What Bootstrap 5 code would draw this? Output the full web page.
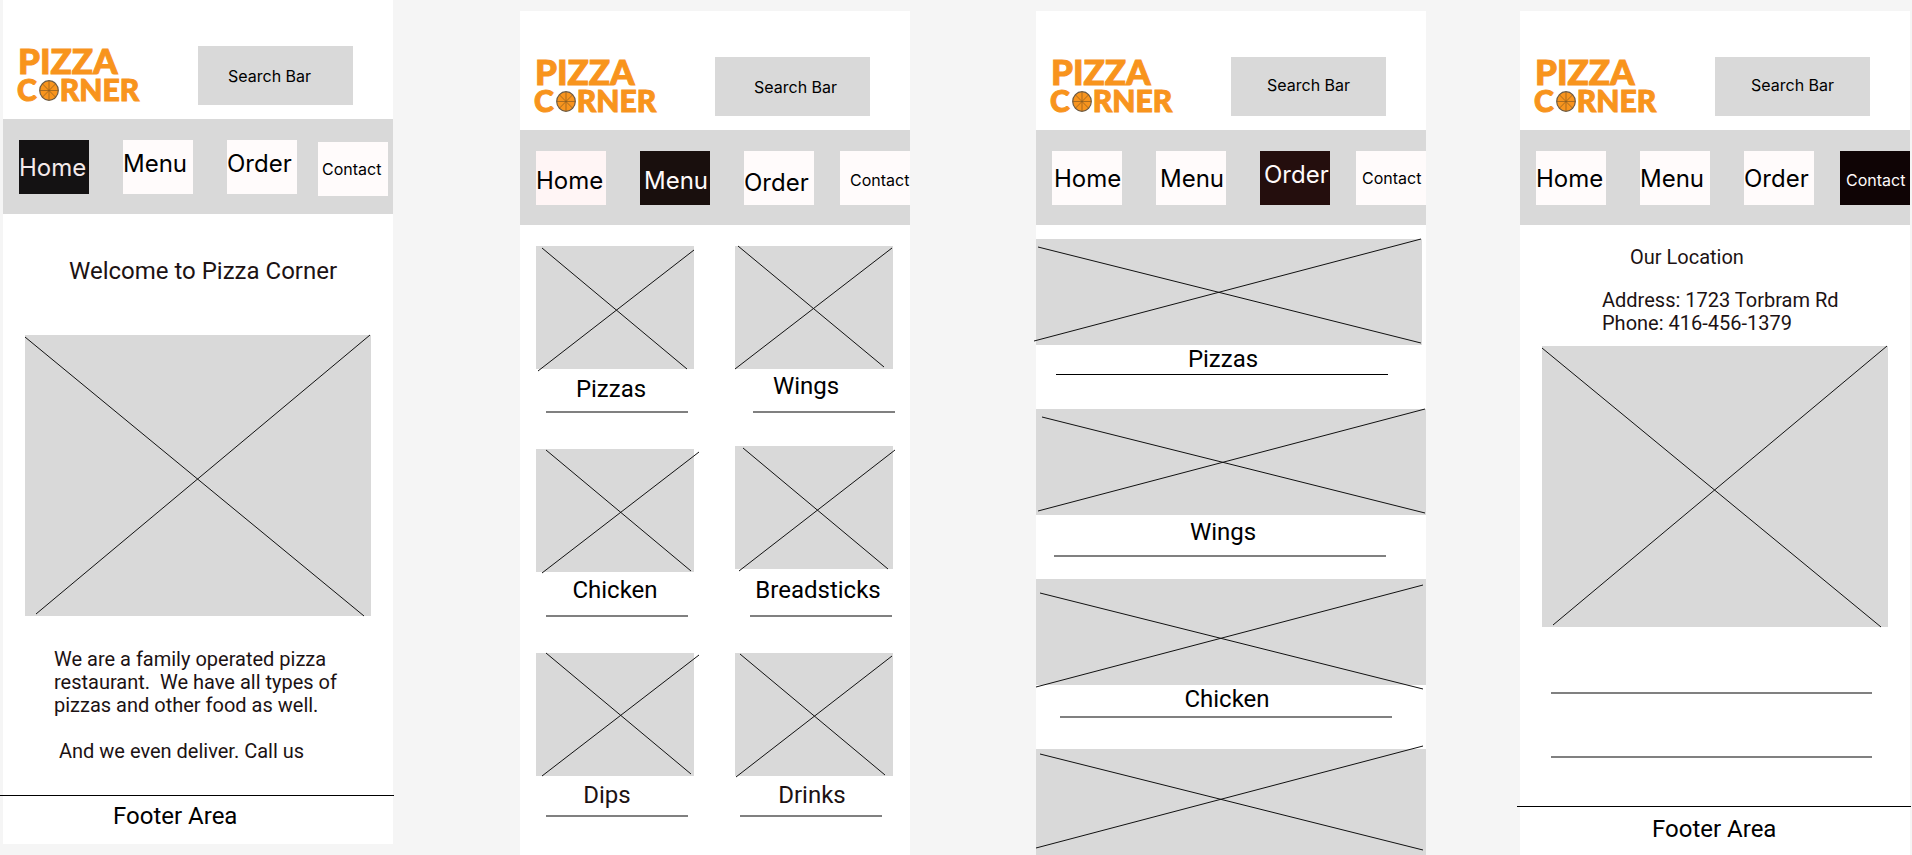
<!DOCTYPE html>
<html lang="en">
<head>
<meta charset="utf-8">
<meta name="viewport" content="width=device-width, initial-scale=1">
<title>Pizza Corner wireframes</title>
<link href="https://cdn.jsdelivr.net/npm/bootstrap@5.3.0/dist/css/bootstrap.min.css" rel="stylesheet">
<style>
  body { background: #f5f5f5; color: #000; font-family: Roboto, "Liberation Sans", sans-serif; overflow-x: hidden; }

  /* Artboards */
  .boards { padding: 0 2px 0 3px; }
  .board { flex: 1 1 0; min-width: 0; background: #fff; }
  .board + .board { margin-top: 11px; margin-left: 127px; }
  .board + .board.board-order { margin-left: 126px; }
  .board + .board.board-contact { margin-left: 94px; }

  /* Header */
  .board-head { padding: 46px 40px 14px 14px; }
  .brand { color: #f8941d; font-family: Lato, "Open Sans", sans-serif; font-weight: 900; text-decoration: none; white-space: nowrap; -webkit-text-stroke: 1px #f8941d; }
  .brand-top { font-size: 35px; line-height: 29px; padding-left: 1px; }
  .brand-bottom { font-size: 30px; line-height: 29px; }
  .brand-bottom svg { width: 20px; height: 21px; margin: 5px 1px 0 2px; }
  .search-box { width: 155px; height: 59px; padding: 0 0 0 36px; border: 0; border-radius: 0; background: #d9d9d9; font: 16px/20px Inter, "Liberation Sans", sans-serif; }
  .search-box::placeholder { color: #000; opacity: 1; }
  .board-home .search-box { padding-left: 30px; }
  .board-menu .search-box { padding-left: 39px; }

  /* Navigation bar */
  .board-nav { display: grid; grid-template-columns: 70fr 34fr 70fr 34fr 70fr 26fr 70fr; height: 95px; padding: 21px 0 20px 16px; background: #d9d9d9; font-family: Inter, "Liberation Sans", sans-serif; }
  .tab { display: flex; align-items: center; min-width: 0; height: 54px; background: #fffbfb; color: #000; font-size: 24px; line-height: 29px; text-decoration: none; white-space: nowrap; }
  .tab:nth-child(2) { grid-column: 3; }
  .tab:nth-child(3) { grid-column: 5; }
  .tab:nth-child(4) { grid-column: 7; }
  .tab-contact { font-size: 16px; line-height: 20px; padding-left: 6px; }
  .board-home .board-nav { grid-template-columns: 70fr 34fr 70fr 34fr 70fr 21fr 70fr; padding-right: 5px; }
  .board-home .tab-contact { margin-top: 2px; padding-left: 4px; }
  .board-menu .tab-contact { padding-left: 10px; }
  .board-order .tab { padding-left: 4px; }
  .board-order .tab:first-child { padding-left: 2px; }
  .board-order .tab-contact { padding-left: 6px; }
  .tab-rosy { background: #fff5f5; }
  .on-home { background: #141213; color: #f5eaea; }
  .on-menu { background: #190f0d; color: #fffafa; }
  .on-order { background: #240e0d; color: #fffafa; }
  .on-contact { background: #0f0405; color: #fffafa; }

  /* Text */
  .title-24 { font-size: 24px; line-height: 28px; font-weight: 400; margin: 0; }
  .text-20 { font-size: 20px; line-height: 23px; font-weight: 400; margin: 0; }
  .ink { color: #1c1213; }

  /* Picture placeholders */
  .ph { display: block; width: 100%; background: #d9d9d9; overflow: visible; }
  .ph line { stroke: #111; stroke-width: 1; vector-effect: non-scaling-stroke; }
  .ph-large { height: 281px; }
  .ph-dish { height: 123px; }
  .ph-wide { height: 106px; }

  /* Rules */
  .rule { height: 2px; margin: 0; border: 0; background: #808080; opacity: 1; }
  .rule-black { height: 1px; background: #000; }
  .rule-dish { width: 90%; }
  .rule-wide { width: 85%; }
  .rule-foot { margin-left: -3px; margin-right: -1px; }
  .in-5 { margin-left: 5px; } .in-10 { margin-left: 10px; } .in-15 { margin-left: 15px; } .in-18 { margin-left: 18px; } .in-20 { margin-left: 20px; } .in-24 { margin-left: 24px; }

  /* Vertical rhythm */
  .v-1 { margin-top: 1px; } .v-3 { margin-top: 3px; } .v-4 { margin-top: 4px; } .v-5 { margin-top: 5px; } .v-6 { margin-top: 6px; } .v-7 { margin-top: 7px; } .v-8 { margin-top: 8px; }
  .v-9 { margin-top: 9px; } .v-11 { margin-top: 11px; } .v-14 { margin-top: 14px; } .v-20 { margin-top: 20px; } .v-22 { margin-top: 22px; }
  .v-31 { margin-top: 31px; } .v-33 { margin-top: 33px; } .v-34 { margin-top: 34px; } .v-36 { margin-top: 36px; } .v-62 { margin-top: 62px; }

  /* Page sections */
  .welcome { padding: 43px 0 0 66px; }
  .hero { padding: 50px 22px 0; }
  .about { padding: 32px 0 0 51px; white-space: pre-wrap; }
  .home-foot { padding: 32px 0 14px; }
  .home-foot p { padding-left: 110px; }
  .dishes { padding: 21px 17px 0 16px; gap: 41px; }
  .dish-col { flex: 1 1 0; min-width: 0; }
  .location { padding: 21px 0 0 110px; }
  .address { padding-left: 82px; }
  .map { padding: 11px 22px 0; }
  .notes { padding: 65px 38px 48px 31px; }
  .contact-foot p { padding-left: 132px; }
  figure { margin: 0; }
</style>
</head>
<body>
<svg class="d-none" aria-hidden="true">
  <symbol id="pizza" viewBox="0 0 20 21">
    <ellipse cx="10" cy="10.500" rx="9.300" ry="9.800" fill="#f8941d" stroke="#6b5a45" stroke-width="1.200"/>
    <path d="M10 1v19M1 10.500h18M3.600 4l12.800 13M16.400 4L3.600 17" stroke="#8a5a20" stroke-width=".7" fill="none"/>
  </symbol>
</svg>

<div class="boards d-flex">

  <!-- Home -->
  <section class="board board-home align-self-start">
    <header class="board-head d-flex justify-content-between">
      <a class="brand d-flex flex-column" href="#"><span class="brand-top">PIZZA</span><span class="brand-bottom d-flex">C<svg aria-label="O"><use href="#pizza"/></svg>RNER</span></a>
      <input class="search-box" type="search" placeholder="Search Bar" aria-label="Search Bar">
    </header>
    <nav class="board-nav">
      <a class="tab on-home" href="#">Home</a>
      <a class="tab pb-2" href="#">Menu</a>
      <a class="tab pb-2" href="#">Order</a>
      <a class="tab tab-contact" href="#">Contact</a>
    </nav>
    <main>
      <h1 class="title-24 ink welcome">Welcome to Pizza Corner</h1>
      <div class="hero">
        <svg class="ph ph-large" viewBox="0 0 346 281" preserveAspectRatio="none"><line x1="0" y1="2" x2="339" y2="281"/><line x1="345" y1="0" x2="11" y2="279"/></svg>
      </div>
      <p class="text-20 ink about">We are a family operated pizza
restaurant.  We have all types of
pizzas and other food as well.

 And we even deliver. Call us</p>
    </main>
    <footer class="home-foot">
      <hr class="rule rule-black rule-foot">
      <p class="title-24 v-6">Footer Area</p>
    </footer>
  </section>

  <!-- Menu -->
  <section class="board board-menu">
    <header class="board-head d-flex justify-content-between">
      <a class="brand d-flex flex-column" href="#"><span class="brand-top">PIZZA</span><span class="brand-bottom d-flex">C<svg aria-label="O"><use href="#pizza"/></svg>RNER</span></a>
      <input class="search-box" type="search" placeholder="Search Bar" aria-label="Search Bar">
    </header>
    <nav class="board-nav">
      <a class="tab tab-rosy pt-1" href="#">Home</a>
      <a class="tab on-menu pt-1 ps-1" href="#">Menu</a>
      <a class="tab pt-2" href="#">Order</a>
      <a class="tab tab-contact pt-1" href="#">Contact</a>
    </nav>
    <main class="dishes d-flex">
      <div class="dish-col">
        <figure>
          <svg class="ph ph-dish" viewBox="0 0 158 123" preserveAspectRatio="none"><line x1="6" y1="2" x2="151" y2="123"/><line x1="158" y1="4" x2="2" y2="125"/></svg>
          <figcaption class="title-24 text-center pe-2 v-6">Pizzas</figcaption>
          <hr class="rule rule-dish in-10 v-8">
        </figure>
        <figure class="v-36">
          <svg class="ph ph-dish" viewBox="0 0 158 123" preserveAspectRatio="none"><line x1="10" y1="1" x2="155" y2="122"/><line x1="163" y1="3" x2="6" y2="124"/></svg>
          <figcaption class="title-24 text-center v-4">Chicken</figcaption>
          <hr class="rule rule-dish in-10 v-11">
        </figure>
        <figure class="v-36">
          <svg class="ph ph-dish" viewBox="0 0 158 123" preserveAspectRatio="none"><line x1="10" y1="0" x2="155" y2="121"/><line x1="163" y1="2" x2="6" y2="123"/></svg>
          <figcaption class="title-24 ink text-center pe-3 v-5">Dips</figcaption>
          <hr class="rule rule-dish in-10 v-6">
        </figure>
      </div>
      <div class="dish-col">
        <figure>
          <svg class="ph ph-dish" viewBox="0 0 158 123" preserveAspectRatio="none"><line x1="3" y1="0" x2="149" y2="121"/><line x1="157" y1="2" x2="0" y2="123"/></svg>
          <figcaption class="title-24 text-center pe-3 v-3">Wings</figcaption>
          <hr class="rule rule-dish in-18 v-11">
        </figure>
        <figure class="v-33">
          <svg class="ph ph-dish" viewBox="0 0 158 123" preserveAspectRatio="none"><line x1="8" y1="2" x2="153" y2="123"/><line x1="160" y1="4" x2="4" y2="125"/></svg>
          <figcaption class="title-24 text-center ps-2 v-7">Breadsticks</figcaption>
          <hr class="rule rule-dish in-15 v-11">
        </figure>
        <figure class="v-36">
          <svg class="ph ph-dish" viewBox="0 0 158 123" preserveAspectRatio="none"><line x1="5" y1="1" x2="150" y2="122"/><line x1="157" y1="3" x2="1" y2="124"/></svg>
          <figcaption class="title-24 ink text-center pe-1 v-5">Drinks</figcaption>
          <hr class="rule rule-dish in-5 v-6">
        </figure>
      </div>
    </main>
  </section>

  <!-- Order -->
  <section class="board board-order">
    <header class="board-head d-flex justify-content-between">
      <a class="brand d-flex flex-column" href="#"><span class="brand-top">PIZZA</span><span class="brand-bottom d-flex">C<svg aria-label="O"><use href="#pizza"/></svg>RNER</span></a>
      <input class="search-box pb-1" type="search" placeholder="Search Bar" aria-label="Search Bar">
    </header>
    <nav class="board-nav">
      <a class="tab" href="#">Home</a>
      <a class="tab" href="#">Menu</a>
      <a class="tab on-order pb-2" href="#">Order</a>
      <a class="tab tab-contact" href="#">Contact</a>
    </nav>
    <main>
      <figure class="v-14">
        <div class="me-1"><svg class="ph ph-wide" viewBox="0 0 386 106" preserveAspectRatio="none"><line x1="2" y1="8" x2="385" y2="104"/><line x1="385" y1="0" x2="-2" y2="102"/></svg></div>
        <figcaption class="title-24 text-center pe-3">Pizzas</figcaption>
        <hr class="rule rule-black rule-wide in-20 v-1">
      </figure>
      <figure class="v-34">
        <svg class="ph ph-wide" viewBox="0 0 390 106" preserveAspectRatio="none"><line x1="6" y1="8" x2="389" y2="104"/><line x1="389" y1="0" x2="2" y2="102"/></svg>
        <figcaption class="title-24 text-center pe-3 v-3">Wings</figcaption>
        <hr class="rule rule-wide in-18 v-9">
      </figure>
      <figure class="v-22">
        <svg class="ph ph-wide" viewBox="0 0 390 106" preserveAspectRatio="none"><line x1="4" y1="14" x2="387" y2="110"/><line x1="387" y1="6" x2="0" y2="108"/></svg>
        <figcaption class="title-24 text-center pe-2">Chicken</figcaption>
        <hr class="rule rule-wide in-24 v-3">
      </figure>
      <figure class="v-31">
        <svg class="ph ph-wide" viewBox="0 0 390 106" preserveAspectRatio="none"><line x1="4" y1="5" x2="387" y2="101"/><line x1="387" y1="-3" x2="0" y2="99"/></svg>
      </figure>
    </main>
  </section>

  <!-- Contact -->
  <section class="board board-contact">
    <header class="board-head d-flex justify-content-between">
      <a class="brand d-flex flex-column" href="#"><span class="brand-top">PIZZA</span><span class="brand-bottom d-flex">C<svg aria-label="O"><use href="#pizza"/></svg>RNER</span></a>
      <input class="search-box pb-1" type="search" placeholder="Search Bar" aria-label="Search Bar">
    </header>
    <nav class="board-nav">
      <a class="tab" href="#">Home</a>
      <a class="tab" href="#">Menu</a>
      <a class="tab" href="#">Order</a>
      <a class="tab tab-contact on-contact pt-1" href="#">Contact</a>
    </nav>
    <main>
      <h2 class="text-20 ink location">Our Location</h2>
      <address class="text-20 ink v-20 address">Address: 1723 Torbram Rd<br>Phone: 416-456-1379</address>
      <div class="map">
        <svg class="ph ph-large" viewBox="0 0 346 281" preserveAspectRatio="none"><line x1="0" y1="2" x2="339" y2="281"/><line x1="345" y1="0" x2="11" y2="279"/></svg>
      </div>
      <div class="notes">
        <hr class="rule">
        <hr class="rule v-62">
      </div>
    </main>
    <footer class="contact-foot pb-2">
      <hr class="rule rule-black rule-foot">
      <p class="title-24 v-8">Footer Area</p>
    </footer>
  </section>

</div>
<script src="https://cdn.jsdelivr.net/npm/bootstrap@5.3.0/dist/js/bootstrap.bundle.min.js"></script>
</body>
</html>
